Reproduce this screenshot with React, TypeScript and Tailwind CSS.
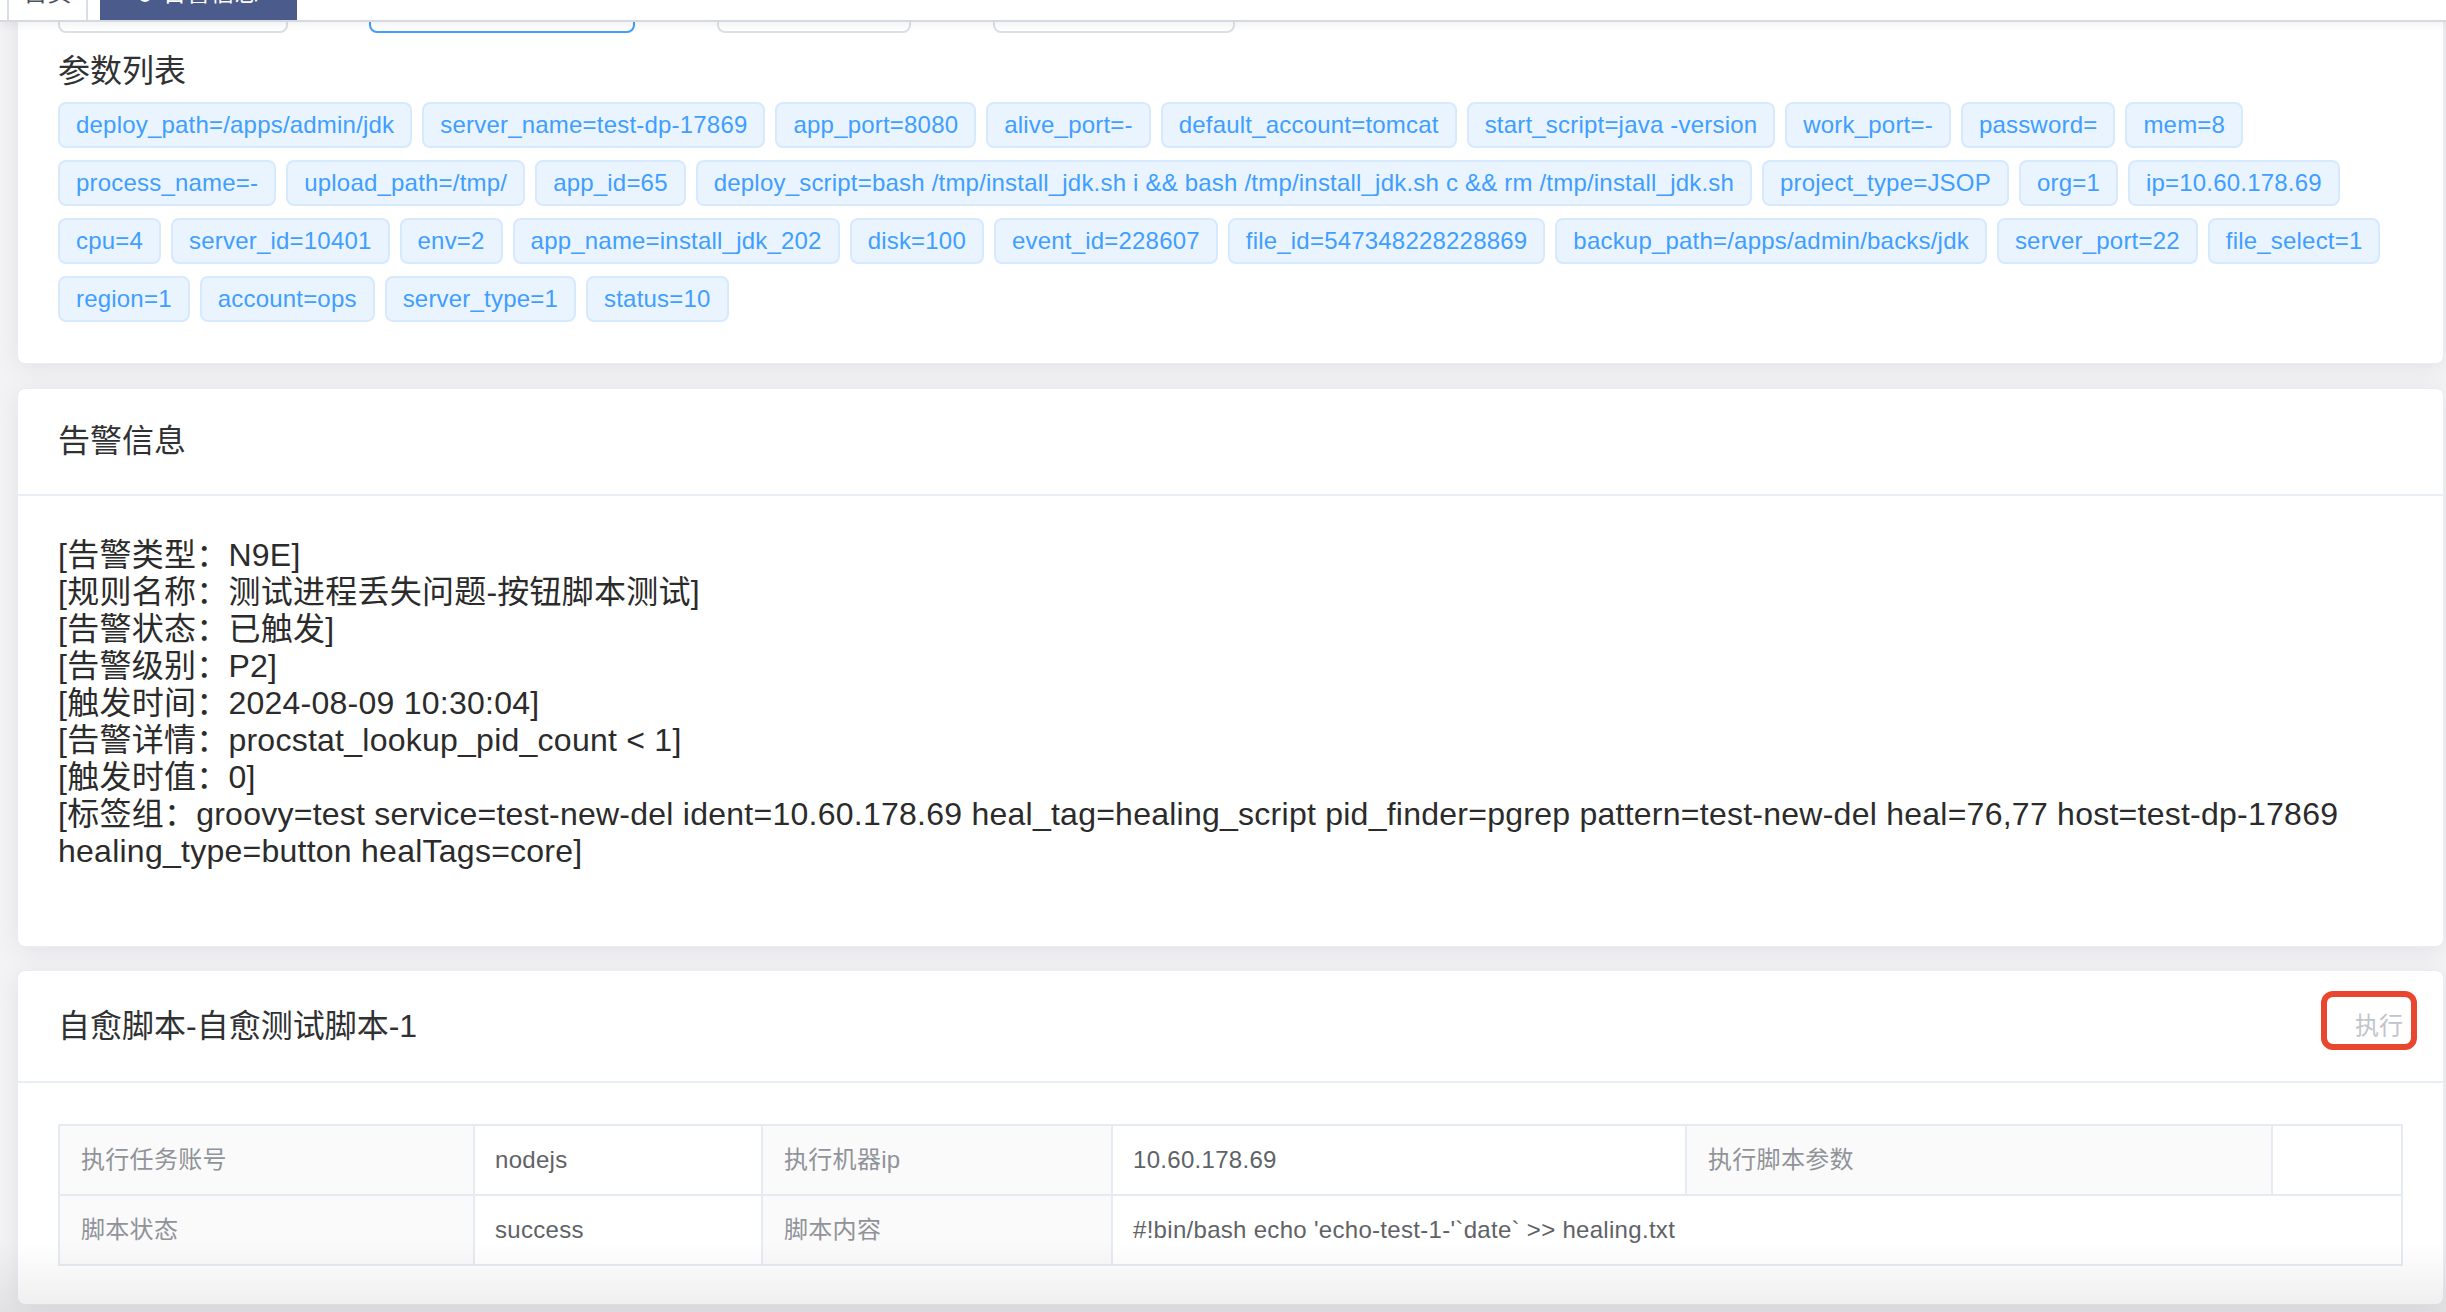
import type { ReactNode } from 'react';

const FONT = "font-['Liberation_Sans','Noto_Sans_CJK_SC',sans-serif]";

const tagRows: string[][] = [
  [
    'deploy_path=/apps/admin/jdk',
    'server_name=test-dp-17869',
    'app_port=8080',
    'alive_port=-',
    'default_account=tomcat',
    'start_script=java -version',
    'work_port=-',
    'password=',
    'mem=8',
  ],
  [
    'process_name=-',
    'upload_path=/tmp/',
    'app_id=65',
    'deploy_script=bash /tmp/install_jdk.sh i && bash /tmp/install_jdk.sh c && rm /tmp/install_jdk.sh',
    'project_type=JSOP',
    'org=1',
    'ip=10.60.178.69',
  ],
  [
    'cpu=4',
    'server_id=10401',
    'env=2',
    'app_name=install_jdk_202',
    'disk=100',
    'event_id=228607',
    'file_id=547348228228869',
    'backup_path=/apps/admin/backs/jdk',
    'server_port=22',
    'file_select=1',
  ],
  ['region=1', 'account=ops', 'server_type=1', 'status=10'],
];

const alertLines = [
  '[告警类型：N9E]',
  '[规则名称：测试进程丢失问题-按钮脚本测试]',
  '[告警状态：已触发]',
  '[告警级别：P2]',
  '[触发时间：2024-08-09 10:30:04]',
  '[告警详情：procstat_lookup_pid_count < 1]',
  '[触发时值：0]',
];

function Card({ className = '', children }: { className?: string; children: ReactNode }) {
  return (
    <section
      className={`bg-white border border-[#e8ecf4] rounded-[8px] shadow-[0_4px_24px_rgba(0,0,0,0.07)] ${className}`}
    >
      {children}
    </section>
  );
}

function CardHeader({ height, children }: { height: string; children: ReactNode }) {
  return (
    <header
      className={`${height} px-[40px] border-b-2 border-[#e9edf5] flex items-center justify-between`}
    >
      {children}
    </header>
  );
}

function Tag({ label }: { label: string }) {
  return (
    <span className="h-[46px] px-[16px] border-2 border-[#d6e9fd] bg-[#eaf4ff] rounded-[8px] text-[#409eff] text-[24px] tracking-[0.2px] whitespace-nowrap flex items-center">
      {label}
    </span>
  );
}

function LabelCell({ children }: { children?: ReactNode }) {
  return (
    <td className="h-[70px] px-[21px] border-2 border-[#e6eaf2] bg-[#fafafa] text-[#909399] text-[24px] tracking-[0.3px]">
      {children}
    </td>
  );
}

function ValueCell({ children, span }: { children?: ReactNode; span?: number }) {
  return (
    <td
      colSpan={span}
      className="h-[70px] px-[20px] border-2 border-[#e6eaf2] bg-white text-[#606266] text-[24px] tracking-[0.3px]"
    >
      {children}
    </td>
  );
}

export default function App() {
  return (
    <div className={`${FONT} relative h-[1312px] overflow-hidden bg-[#f3f3f5]`}>
      {/* tab strip, scrolled so only its lower edge shows */}
      <nav className="absolute top-0 left-0 right-0 z-10 h-[22px] bg-white border-b-2 border-[#d6d9e2] shadow-[0_3px_8px_rgba(0,0,0,0.06)] overflow-hidden flex">
        <div className="ml-[7px] w-[81px] h-full bg-white border-x-2 border-[#d8dce5] flex justify-center">
          <span className="-mt-[19px] text-[24px] leading-[24px] text-[#495060]">首页</span>
        </div>
        <div className="ml-[12px] w-[197px] h-full bg-[#4b5b8b] flex justify-center gap-[12px]">
          <span className="-mt-[10px] w-[12px] h-[12px] rounded-full bg-white" />
          <span className="-mt-[19px] text-[24px] leading-[24px] text-white">告警信息</span>
        </div>
      </nav>

      <main className="flex flex-col pl-[17px] pr-[2px]">
        <Card className="-mt-[71px] px-[40px] pt-[40px] pb-[41px]">
          <div className="h-[63px] flex">
            <div className="w-[230px] border-2 border-[#dcdfe6] rounded-[8px]" />
            <div className="ml-[81px] w-[266px] border-2 border-[#409eff] rounded-[8px]" />
            <div className="ml-[82px] w-[194px] border-2 border-[#dcdfe6] rounded-[8px]" />
            <div className="ml-[82px] w-[242px] border-2 border-[#dcdfe6] rounded-[8px]" />
          </div>
          <h3 className="mt-[20px] text-[32px] leading-[37px] text-[#303133]">参数列表</h3>
          <div className="mt-[12px] flex flex-col gap-[12px]">
            {tagRows.map((row, i) => (
              <div key={i} className="flex gap-[10px]">
                {row.map((t) => (
                  <Tag key={t} label={t} />
                ))}
              </div>
            ))}
          </div>
        </Card>

        <Card className="mt-[24px]">
          <CardHeader height="h-[107px]">
            <h3 className="text-[32px] leading-[37px] text-[#303133]">告警信息</h3>
          </CardHeader>
          <div className="px-[40px] pt-[41px] pb-[39px] text-[32px] leading-[37px] tracking-[0.25px] text-[#2b2b2b]">
            {alertLines.map((l) => (
              <div key={l}>{l}</div>
            ))}
            <div>
              [标签组：groovy=test service=test-new-del ident=10.60.178.69 heal_tag=healing_script
              pid_finder=pgrep pattern=test-new-del heal=76,77 host=test-dp-17869
              <br />
              healing_type=button healTags=core]
            </div>
            <div className="h-[37px]" />
          </div>
        </Card>

        <Card className="mt-[23px]">
          <CardHeader height="h-[112px]">
            <h3 className="text-[32px] leading-[37px] text-[#303133]">自愈脚本-自愈测试脚本-1</h3>
            <button type="button" className="relative text-[24px] leading-[24px] text-[#c0c4cc]">
              执行
              <span className="absolute -left-[34px] -right-[14px] -top-[23px] -bottom-[12px] border-[6px] border-[#e8462e] rounded-[12px]" />
            </button>
          </CardHeader>
          <div className="px-[40px] pt-[41px] pb-[38px]">
            <table className="w-full table-fixed border-collapse">
              <colgroup>
                <col className="w-[415px]" />
                <col className="w-[288px]" />
                <col className="w-[350px]" />
                <col className="w-[574px]" />
                <col className="w-[586px]" />
                <col />
              </colgroup>
              <tbody>
                <tr>
                  <LabelCell>执行任务账号</LabelCell>
                  <ValueCell>nodejs</ValueCell>
                  <LabelCell>执行机器ip</LabelCell>
                  <ValueCell>10.60.178.69</ValueCell>
                  <LabelCell>执行脚本参数</LabelCell>
                  <ValueCell />
                </tr>
                <tr>
                  <LabelCell>脚本状态</LabelCell>
                  <ValueCell>success</ValueCell>
                  <LabelCell>脚本内容</LabelCell>
                  <ValueCell span={3}>#!bin/bash echo 'echo-test-1-'`date` &gt;&gt; healing.txt</ValueCell>
                </tr>
              </tbody>
            </table>
          </div>
        </Card>
      </main>

      <div className="pointer-events-none absolute left-0 right-0 bottom-0 h-[70px] bg-gradient-to-b from-transparent to-black/[0.07]" />
    </div>
  );
}
